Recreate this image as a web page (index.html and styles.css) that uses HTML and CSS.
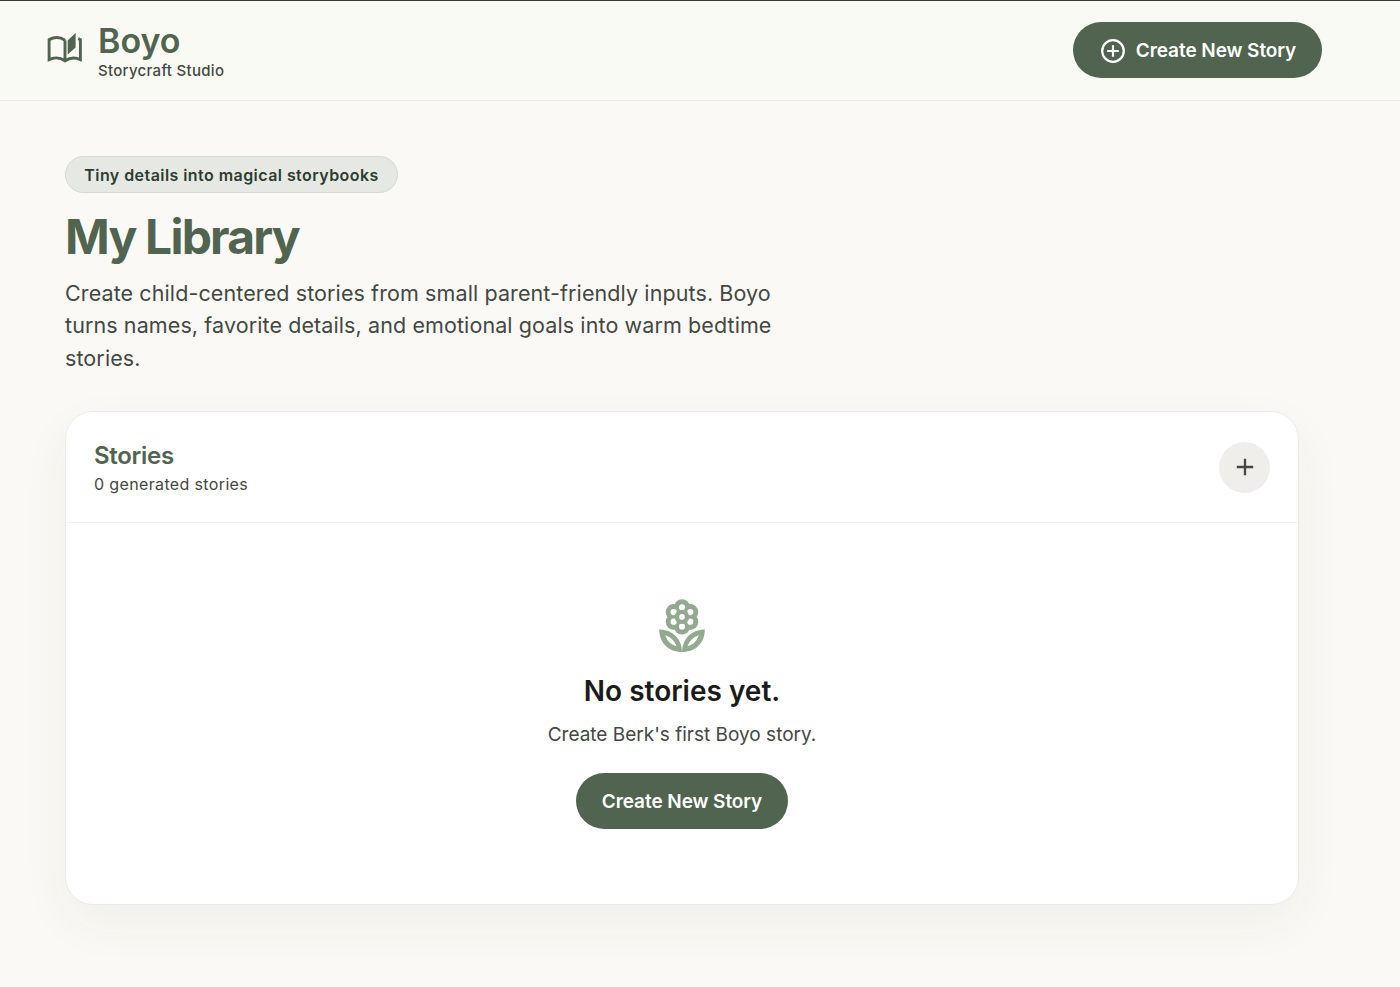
FILE: index.html
```
<!DOCTYPE html>
<html lang="en">
<head>
    <meta charset="UTF-8">
    <meta name="viewport" content="width=device-width, initial-scale=1.0">
    <title>Boyo - My Library</title>
    <link rel="stylesheet" href="styles.css">
</head>
<body>
    <header class="topbar">
        <a class="brand" href="#">
            <svg class="brand-icon" viewBox="0 0 36 32" aria-hidden="true">
                <path class="book-line" d="M18 8.2C13.2 4.9 7.3 4.9 2.1 7.6V27.6C7.3 25.2 13.2 25.4 18 28.9C22.8 25.4 28.2 25.2 33.4 27.6V7.6L31.2 6.7M18 8.2V28.5"/>
                <path class="book-page" d="M20.7 8.6L28.6 1V15.5L20.7 22.5Z"/>
            </svg>
            <div class="brand-text">
                <span class="brand-name">Boyo</span>
                <span class="brand-sub">Storycraft Studio</span>
            </div>
        </a>
        <button class="btn btn-icon">
            <svg class="plus-circle" viewBox="0 0 24 24" aria-hidden="true">
                <circle cx="12" cy="12" r="10.8"/>
                <path d="M12 6.2V17.8M6.2 12H17.8"/>
            </svg>
            <span>Create New Story</span>
        </button>
    </header>

    <main class="page">
        <!-- Intro -->
        <section class="intro">
            <span class="pill">Tiny details into magical storybooks</span>
            <h1>My Library</h1>
            <p class="lead">
                Create child-centered stories from small parent-friendly inputs. Boyo
                turns names, favorite details, and emotional goals into warm bedtime
                stories.
            </p>
        </section>

        <!-- Stories -->
        <section class="card">
            <div class="card-head">
                <div class="card-title">
                    <h2>Stories</h2>
                    <p class="count">0 generated stories</p>
                </div>
                <button class="add" aria-label="Add story">
                    <svg viewBox="0 0 18 18" aria-hidden="true"><path d="M9 0.8V17.2M0.8 9H17.2"/></svg>
                </button>
            </div>
            <div class="empty">
                <svg class="flower" viewBox="0 0 46 54" aria-hidden="true">
                    <g class="leaf">
                        <circle cx="23" cy="8.2" r="7.9"/>
                        <circle cx="31.4" cy="13" r="7.9"/>
                        <circle cx="31.4" cy="22.8" r="7.9"/>
                        <circle cx="23" cy="27.6" r="7.9"/>
                        <circle cx="14.6" cy="22.8" r="7.9"/>
                        <circle cx="14.6" cy="13" r="7.9"/>
                        <path d="M0.2 30.5C13 30.5 22.5 39 23 53C9.5 53 0.2 44 0.2 30.5Z"/>
                        <path d="M45.8 30.5C33 30.5 23.5 39 23 53C36.5 53 45.8 44 45.8 30.5Z"/>
                    </g>
                    <g class="gap">
                        <circle cx="23" cy="8.3" r="3.1"/>
                        <circle cx="31.3" cy="13.1" r="3.1"/>
                        <circle cx="31.3" cy="22.7" r="3.1"/>
                        <circle cx="23" cy="27.5" r="3.1"/>
                        <circle cx="14.7" cy="22.7" r="3.1"/>
                        <circle cx="14.7" cy="13.1" r="3.1"/>
                    </g>
                    <circle class="leaf" cx="23" cy="17.9" r="7.2"/>
                    <circle class="gap" cx="23" cy="17.9" r="2.8"/>
                    <path class="gap" d="M6.2 36.3C12 38.2 15.5 42 17.4 47.3C11.7 45.4 8.1 42 6.2 36.3Z"/>
                    <path class="gap" d="M39.8 36.3C34 38.2 30.5 42 28.6 47.3C34.3 45.4 37.9 42 39.8 36.3Z"/>
                </svg>
                <h3>No stories yet.</h3>
                <p class="hint">Create Berk's first Boyo story.</p>
                <button class="btn">Create New Story</button>
            </div>
        </section>
    </main>
</body>
</html>
```
FILE: styles.css
```
* {
    margin: 0;
    padding: 0;
    box-sizing: border-box;
}

body {
    min-height: 987px;
    background: #fbf9f5;
    color: #434843;
    font-family: "Inter", "Liberation Sans", sans-serif;
    overflow-x: hidden;
}

.topbar {
    display: flex;
    justify-content: space-between;
    align-items: flex-start;
    height: 101px;
    padding: 21px 78px 0 47px;
    background: #fafaf5;
    border-top: 1px solid #3a383a;
    border-bottom: 1px solid #ebece7;
}

.brand {
    display: flex;
    gap: 15px;
    padding-top: 2px;
    color: inherit;
    text-decoration: none;
}

.brand-icon {
    width: 36px;
    height: 32px;
    margin-top: 8px;
}

.book-line {
    fill: none;
    stroke: #50644f;
    stroke-width: 2.9;
}

.book-page {
    fill: #50644f;
}

.brand-text {
    display: flex;
    flex-direction: column;
}

.brand-name {
    font-size: 34px;
    font-weight: 600;
    line-height: 34px;
    color: #50644f;
}

.brand-sub {
    margin-top: 3px;
    font-size: 15px;
    font-weight: 500;
    line-height: 20px;
    letter-spacing: 0.3px;
}

.btn {
    display: inline-flex;
    align-items: center;
    justify-content: center;
    width: 212px;
    height: 56px;
    padding-top: 1px;
    border: none;
    border-radius: 28px;
    background: #50644f;
    color: #fff;
    font-family: inherit;
    font-size: 19px;
    font-weight: 600;
    letter-spacing: -0.07px;
    white-space: nowrap;
}

.btn-icon {
    gap: 11px;
    width: 249px;
    padding-left: 2px;
}

.plus-circle {
    width: 24px;
    height: 24px;
    fill: none;
    stroke: #fff;
    stroke-width: 2.2;
}

.page {
    width: 1234px;
    margin-left: 65px;
    padding-top: 55px;
}

.intro {
    height: 255px;
}

.pill {
    display: flex;
    align-items: center;
    justify-content: center;
    width: 333px;
    height: 37px;
    border: 1px solid #d3dbd2;
    border-radius: 19px;
    background: #e6e9e3;
    color: #2b3d2d;
    font-size: 16px;
    font-weight: 600;
    letter-spacing: 0.44px;
    white-space: nowrap;
}

h1 {
    margin-top: 14px;
    font-size: 48px;
    font-weight: 650;
    line-height: 60px;
    letter-spacing: -1.8px;
    color: #50644f;
}

.lead {
    width: 730px;
    margin-top: 10px;
    font-size: 21.5px;
    line-height: 32.4px;
    letter-spacing: 0.1px;
}

.card {
    height: 494px;
    background: #fff;
    border: 1px solid #ecebe8;
    border-radius: 28px;
    box-shadow: 0 18px 50px rgba(50, 50, 40, 0.05);
}

.card-head {
    display: flex;
    justify-content: space-between;
    align-items: center;
    height: 111px;
    padding: 0 28px;
    border-bottom: 1px solid #f3f3f1;
}

.card-title {
    padding-top: 3px;
}

h2 {
    font-size: 24px;
    font-weight: 600;
    line-height: 30px;
    letter-spacing: -0.3px;
    color: #50644f;
}

.count {
    margin-top: 1px;
    font-size: 16px;
    line-height: 24px;
    letter-spacing: 0.36px;
}

.add {
    display: flex;
    align-items: center;
    justify-content: center;
    width: 51px;
    height: 51px;
    border: none;
    border-radius: 50%;
    background: #efeeea;
}

.add svg {
    width: 18px;
    height: 18px;
    stroke: #434843;
    stroke-width: 2.3;
}

.empty {
    display: flex;
    flex-direction: column;
    align-items: center;
    padding-top: 76px;
}

.flower {
    width: 46px;
    height: 54px;
}

.leaf {
    fill: #93aa91;
}

.gap {
    fill: #fff;
}

h3 {
    margin-top: 20px;
    font-size: 28px;
    font-weight: 600;
    line-height: 36px;
    color: #1b1c1a;
}

.hint {
    margin: 12px 0 24px;
    font-size: 19px;
    line-height: 28px;
}
```
